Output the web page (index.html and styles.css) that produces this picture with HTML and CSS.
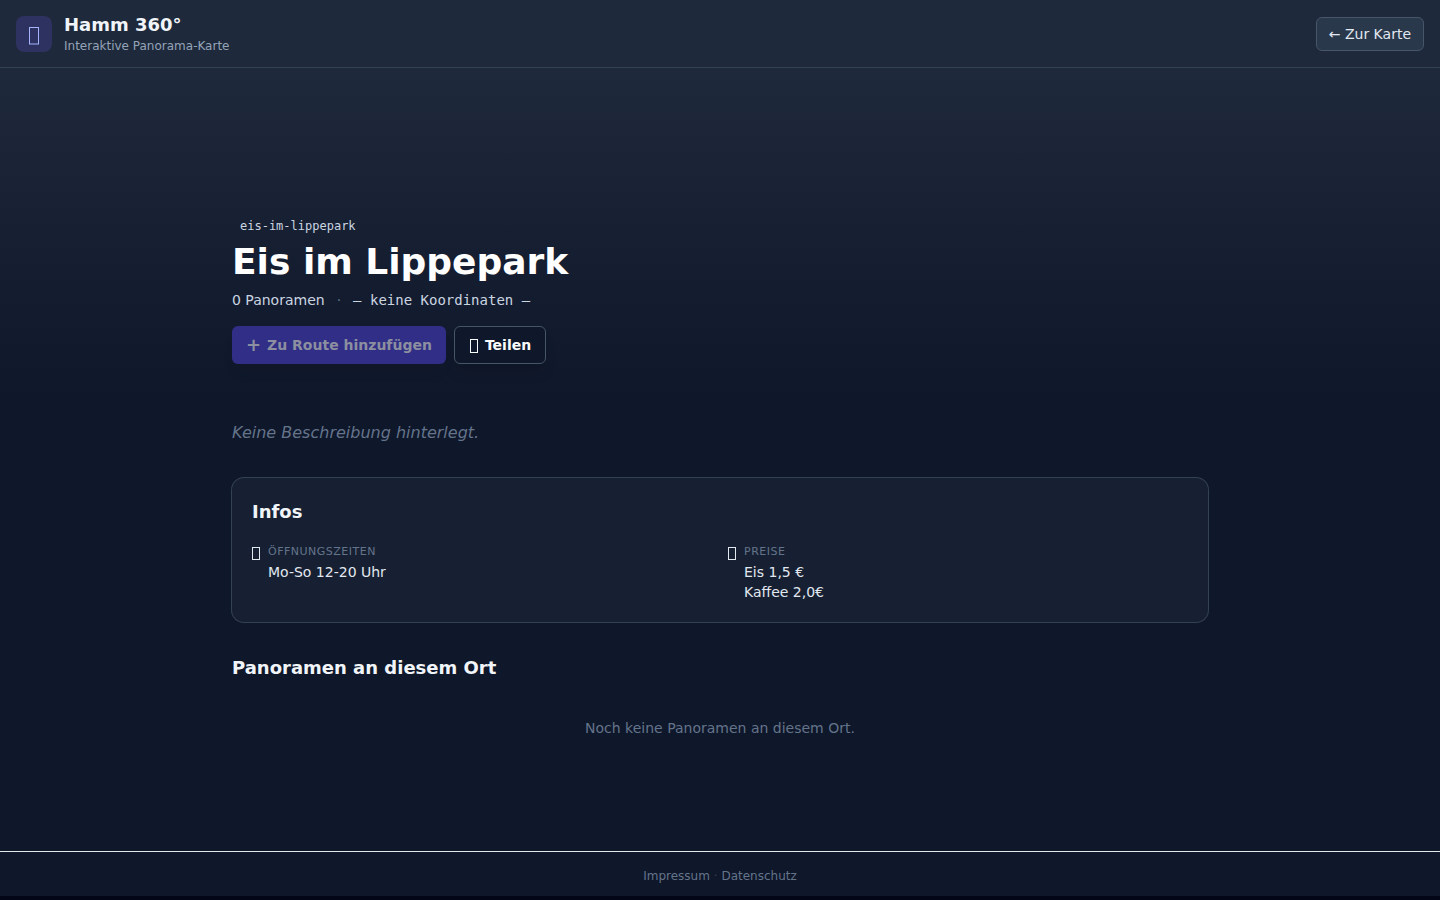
FILE: index.html
```
<!DOCTYPE html>
<html lang="de">
<head>
  <meta charset="UTF-8">
  <meta name="viewport" content="width=device-width, initial-scale=1">
  <title>Eis im Lippepark – Hamm 360°</title>
  <link rel="stylesheet" href="styles.css">
</head>
<body>
  <div class="page">
    <header class="topbar">
      <div class="logo">
        <svg width="12" height="22" viewBox="0 0 12 22" aria-hidden="true"><rect x="1.5" y="4.5" width="9" height="16.5"/></svg>
      </div>
      <div class="brand">
        <div class="brand-name">Hamm 360°</div>
        <div class="brand-sub">Interaktive Panorama-Karte</div>
      </div>
      <a class="back-link" href="#">← Zur Karte</a>
    </header>

    <section class="hero">
      <div class="container">
        <div class="slug">eis-im-lippepark</div>
        <h1>Eis im Lippepark</h1>
        <div class="meta">
          <span>0 Panoramen</span>
          <span class="dot">·</span>
          <span class="coords">— keine Koordinaten —</span>
        </div>
        <div class="actions">
          <button type="button" class="btn btn-primary" disabled><span class="plus">+</span>Zu Route hinzufügen</button>
          <button type="button" class="btn btn-outline">
            <svg width="10" height="16" viewBox="0 0 10 16" aria-hidden="true"><rect x="1.5" y="2.5" width="7" height="13"/></svg>
            Teilen
          </button>
        </div>
      </div>
    </section>

    <main class="container content">
      <p class="no-description">Keine Beschreibung hinterlegt.</p>

      <section class="card">
        <h2>Infos</h2>
        <dl class="info-grid">
          <div class="info">
            <svg width="8" height="13" viewBox="0 0 8 13" aria-hidden="true"><rect x="0.5" y="0.5" width="7" height="12"/></svg>
            <div>
              <dt>Öffnungszeiten</dt>
              <dd>Mo-So 12-20 Uhr</dd>
            </div>
          </div>
          <div class="info">
            <svg width="8" height="13" viewBox="0 0 8 13" aria-hidden="true"><rect x="0.5" y="0.5" width="7" height="12"/></svg>
            <div>
              <dt>Preise</dt>
              <dd>Eis 1,5 €<br>Kaffee 2,0€</dd>
            </div>
          </div>
        </dl>
      </section>

      <section>
        <h2>Panoramen an diesem Ort</h2>
        <p class="empty">Noch keine Panoramen an diesem Ort.</p>
      </section>
    </main>

    <footer class="footer">
      <a href="#">Impressum</a> <span>·</span> <a href="#">Datenschutz</a>
    </footer>
  </div>
</body>
</html>
```

FILE: styles.css
```
* {
  box-sizing: border-box;
}
body {
  margin: 0;
  background: #020617;
  color: #f1f5f9;
  font-family: 'DejaVu Sans', sans-serif;
  font-size: 14px;
  line-height: 20px;
}
h1, h2, p, dl, dt, dd {
  margin: 0;
}
svg {
  flex-shrink: 0;
  fill: none;
  stroke: currentColor;
}
.page {
  display: flex;
  flex-direction: column;
  min-height: calc(100vh - 4px);
  background: #0f172a;
}

.topbar {
  display: flex;
  align-items: center;
  gap: 12px;
  height: 68px;
  padding: 0 16px;
  background: #1e293b;
  border-bottom: 1px solid #334155;
}
.logo {
  display: flex;
  align-items: center;
  justify-content: center;
  width: 36px;
  height: 36px;
  border-radius: 8px;
  background: #2d3261;
  color: #a5b4fc;
}
.brand {
  flex: 1;
}
.brand-name {
  font-size: 18px;
  font-weight: bold;
  line-height: 26px;
}
.brand-sub {
  font-size: 12px;
  line-height: 17px;
  color: #94a3b8;
}
.back-link {
  padding: 6px 12px;
  border: 1px solid #475569;
  border-radius: 6px;
  background: #2a384c;
  color: #e2e8f0;
  text-decoration: none;
}

.container {
  width: 100%;
  max-width: 1024px;
  margin: 0 auto;
  padding: 0 24px;
}
.hero {
  padding: 148px 0 32px;
  background: linear-gradient(to bottom, #1e293b, #0f172a);
}
.slug {
  padding: 2px 8px;
  font-family: 'DejaVu Sans Mono', monospace;
  font-size: 12px;
  line-height: 16px;
  color: #cbd5e1;
}
h1 {
  margin-top: 4px;
  font-size: 36px;
  line-height: 44px;
  color: #fff;
}
.meta {
  display: flex;
  gap: 12px;
  margin-top: 6px;
  color: #cbd5e1;
}
.dot {
  color: #64748b;
}
.coords {
  font-family: 'DejaVu Sans Mono', monospace;
}
.actions {
  display: flex;
  gap: 8px;
  margin-top: 16px;
}
.btn {
  display: flex;
  align-items: center;
  gap: 6px;
  height: 38px;
  padding: 0 14px;
  border: none;
  border-radius: 6px;
  font: bold 14px/20px 'DejaVu Sans', sans-serif;
  box-shadow: 0 10px 15px -3px rgba(0, 0, 0, 0.1), 0 4px 6px -4px rgba(0, 0, 0, 0.1);
}
.btn-primary {
  background: #312e87;
  color: #8c8f9f;
  box-shadow: 0 10px 15px -3px rgba(0, 0, 0, 0.05);
}
.plus {
  font-size: 18px;
}
.btn-outline {
  border: 1px solid #475569;
  background: #0f172a;
  color: #f8fafc;
}

.content {
  flex: 1;
  padding-top: 24px;
  padding-bottom: 64px;
}
.no-description {
  font-size: 16px;
  line-height: 26px;
  font-style: italic;
  color: #64748b;
}
h2 {
  font-size: 18px;
  line-height: 28px;
}
.card {
  margin: 32px 0;
  padding: 20px;
  border-radius: 12px;
  background: #162032;
  box-shadow: 0 0 0 1px #334155;
}
.info-grid {
  display: grid;
  grid-template-columns: 1fr 1fr;
  gap: 16px;
  margin-top: 16px;
}
.info {
  display: flex;
  gap: 8px;
  color: #e2e8f0;
}
.info svg {
  margin-top: 5px;
}
dt {
  font-size: 11px;
  letter-spacing: 0.5px;
  text-transform: uppercase;
  color: #64748b;
}
.empty {
  padding-top: 36px;
  text-align: center;
  color: #64748b;
}

.footer {
  padding: 16px 16px 12px;
  border-top: 1px solid #e5e7eb;
  text-align: center;
  font-size: 12px;
  line-height: 16px;
  color: #334155;
}
.footer a {
  color: #64748b;
  text-decoration: none;
}
```
